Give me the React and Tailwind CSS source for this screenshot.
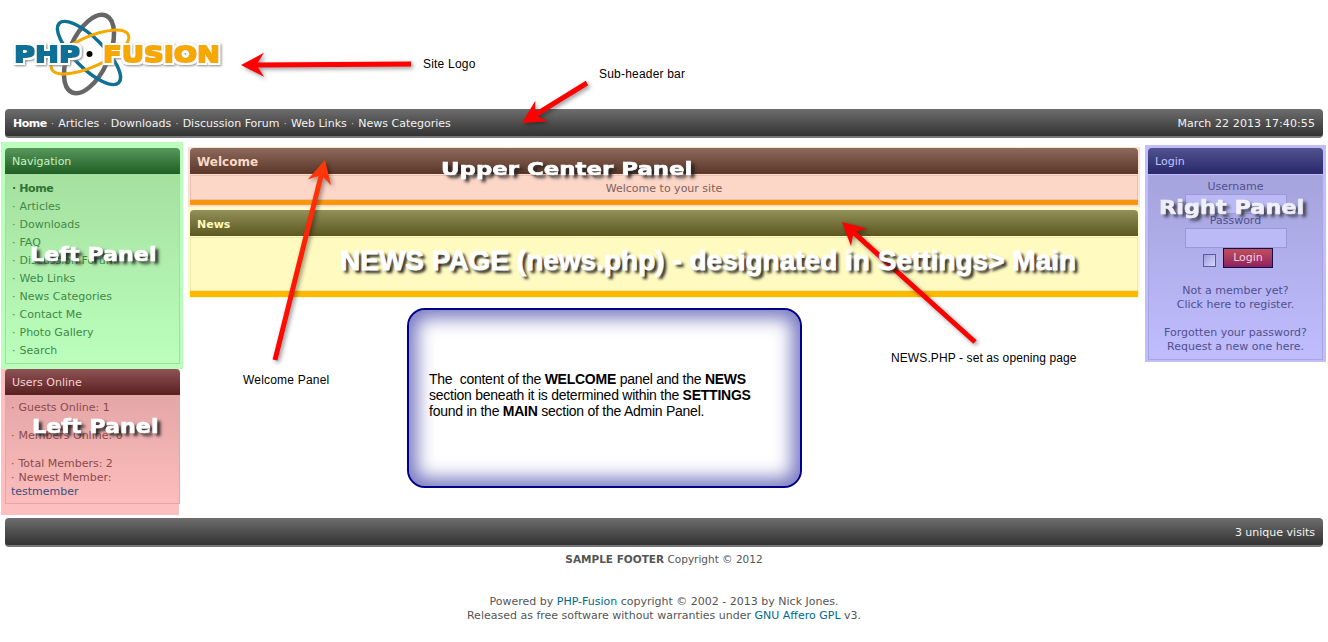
const Arrow = ({ x1, y1, x2, y2, color = '#ff0000', id }) => {
  // shaft plus a notched head, tip at x2/y2
  const len = Math.hypot(x2 - x1, y2 - y1);
  const ux = (x2 - x1) / len;
  const uy = (y2 - y1) / len;
  const nx = -uy;
  const ny = ux;
  const p = (along, side) => `${x2 - ux * along + nx * side},${y2 - uy * along + ny * side}`;
  const points = [
    p(len, 2.5), p(17, 2.5), p(23, 12), p(0, 0), p(23, -12), p(17, -2.5), p(len, -2.5),
  ].join(' ');
  return <polygon points={points} fill={id ? `url(#${id})` : color} />;
};

const Stamp = ({ className, children }) => (
  <span className={`absolute whitespace-nowrap origin-left font-['DejaVu_Sans',sans-serif] font-bold text-white [-webkit-text-stroke:0.6px_#fff] [text-shadow:3px_3px_3px_#222] ${className}`}>
    {children}
  </span>
);

const Annotations = () => (
  <div className="absolute inset-0 pointer-events-none font-['Liberation_Sans',sans-serif] text-black">
    <svg width="1328" height="642" className="absolute left-0 top-0 drop-shadow-[2px_2px_2px_rgba(0,0,0,0.4)]">
      <defs>
        <linearGradient id="welcomeArrow" gradientUnits="userSpaceOnUse" x1="275" y1="360" x2="325" y2="160">
          <stop offset="0" stopColor="#ff0000" />
          <stop offset="1" stopColor="#ff3a0a" />
        </linearGradient>
      </defs>
      <Arrow x1={411} y1={64} x2={241} y2={65} />
      <Arrow x1={587} y1={83} x2={522} y2={123} />
      <Arrow x1={275} y1={360} x2={325} y2={160} id="welcomeArrow" />
      <Arrow x1={975} y1={342} x2={842} y2={222} />
    </svg>

    <span className="absolute left-[423px] top-[57px] text-[12px] leading-[14px] tracking-[0.2px]">Site Logo</span>
    <span className="absolute left-[599px] top-[67px] text-[12px] leading-[14px] tracking-[0.2px]">Sub-header bar</span>
    <span className="absolute left-[243px] top-[373px] text-[12px] leading-[14px] tracking-[0.2px]">Welcome Panel</span>
    <span className="absolute left-[891px] top-[351px] text-[12px] leading-[14px] tracking-[0.1px]">NEWS.PHP - set as opening page</span>

    <Stamp className="left-[30px] top-[243px] text-[19px] leading-[22px] scale-x-[1.17]">Left Panel</Stamp>
    <Stamp className="left-[32px] top-[415px] text-[19px] leading-[22px] scale-x-[1.17]">Left Panel</Stamp>
    <Stamp className="left-[1159px] top-[196px] text-[19px] leading-[22px] scale-x-[1.18] opacity-80">Right Panel</Stamp>
    <Stamp className="left-[441px] top-[158px] text-[18px] leading-[21px] scale-x-[1.27]">Upper Center Panel</Stamp>
    <span className="absolute left-[340px] top-[245px] whitespace-nowrap font-['Liberation_Sans',sans-serif] font-bold text-[28px] leading-[32px] text-white [-webkit-text-stroke:0.8px_#fff] [text-shadow:3px_3px_3px_#222]">
      NEWS PAGE (news.php) - designated in Settings&gt; Main
    </span>
  </div>
);

const Logo = () => (
  <svg width="230" height="100" viewBox="0 0 230 100" className="block">
    <defs>
      <filter id="logoText" x="-10%" y="-30%" width="120%" height="160%">
        <feMorphology in="SourceGraphic" operator="dilate" radius="0.5" result="fat" />
        <feMorphology in="SourceAlpha" operator="dilate" radius="3" result="halo" />
        <feFlood floodColor="#ffffff" />
        <feComposite in2="halo" operator="in" result="white" />
        <feDropShadow in="white" dx="1" dy="1" stdDeviation="1" floodColor="#888888" result="shadowed" />
        <feMerge>
          <feMergeNode in="shadowed" />
          <feMergeNode in="fat" />
        </feMerge>
      </filter>
    </defs>
    <g fill="none">
      <ellipse cx="89" cy="54" rx="42" ry="20" transform="rotate(-66 89 54)" stroke="#666666" strokeWidth="4.5" />
      <ellipse cx="89" cy="53" rx="42" ry="15" transform="rotate(45 89 53)" stroke="#0f6f94" strokeWidth="3.5" />
      <ellipse cx="90" cy="52" rx="42" ry="15" transform="rotate(-24 90 52)" stroke="#f5a800" strokeWidth="3" />
    </g>
    <g fontFamily="'DejaVu Sans', sans-serif" fontWeight="bold" fontSize="22" filter="url(#logoText)">
      <text x="14" y="62" fill="#0f6f94" textLength="66" lengthAdjust="spacingAndGlyphs">PHP</text>
      <text x="103" y="62" fill="#f5a800" textLength="117" lengthAdjust="spacingAndGlyphs">FUSION</text>
    </g>
    <circle cx="89.5" cy="54" r="5" fill="#ffffff" />
    <circle cx="89.5" cy="54" r="3" fill="#000000" />
  </svg>
);

const DarkBar = ({ children }) => (
  <div className="mx-[5px] h-[29px] flex items-center justify-between px-[8px] pt-[4px] rounded-[4px] border-b-2 border-[#777] bg-gradient-to-b from-[#6e6e6e] to-[#333333] text-[11px] text-[#f2f2f2]">
    {children}
  </div>
);

const PanelHead = ({ className, children }) => (
  <div className={`h-[26px] flex items-center px-[7px] pt-[2px] rounded-t-[4px] text-[11px] ${className}`}>{children}</div>
);

const navLinks = ['Articles', 'Downloads', 'FAQ', 'Discussion Forum', 'Web Links', 'News Categories', 'Contact Me', 'Photo Gallery', 'Search'];

const LeftColumn = () => (
  <div className="w-[182px] ml-[1px] shrink-0">
    <div className="bg-[#bbfdbc] pt-[6px] px-[4px] pb-[4px] h-[227px] w-[182px]">
      <PanelHead className="w-[175px] bg-gradient-to-b from-[#58985c] to-[#1f5f24] text-[#c6f2c0]">Navigation</PanelHead>
      <div className="w-[175px] h-[190px] border border-[#a3dea0] bg-gradient-to-b from-[#a5e09f] to-[#bbffbc] pt-[5px] pl-[6px] text-[11px] leading-[18px] text-[#3f8a48]">
        <div className="font-bold text-[#2f7435]"><span className="mr-[3px]">·</span><span className="tracking-[-0.4px]">Home</span></div>
        {navLinks.map((link) => (
          <div key={link}><span className="mr-[4px]">·</span>{link}</div>
        ))}
      </div>
    </div>
    <div className="bg-[#fdbfbf] px-[4px] h-[146px] w-[178px]">
      <PanelHead className="w-[175px] h-[25px] bg-gradient-to-b from-[#8e5355] to-[#5a1f20] text-[#f6d2d0]">Users Online</PanelHead>
      <div className="w-[175px] h-[109px] border border-[#e0a8a8] bg-gradient-to-b from-[#e4a6a6] to-[#fdbdbd] pt-[5px] pl-[5px] text-[11px] leading-[14px] text-[#8c4a4c]">
        <div><span className="mr-[4px]">·</span>Guests Online: 1</div>
        <div className="mt-[14px]"><span className="mr-[4px]">·</span>Members Online: 0</div>
        <div className="mt-[14px]"><span className="mr-[4px]">·</span>Total Members: 2</div>
        <div><span className="mr-[4px]">·</span>Newest Member:</div>
        <div className="text-[#35517f]">testmember</div>
      </div>
    </div>
  </div>
);

const CenterColumn = () => (
  <div className="w-[952px] ml-[5px] mt-[5px] shrink-0">
    <div className="bg-[#fde0d4] px-[2px] pt-[1px] pb-[2px] h-[60px]">
      <PanelHead className="bg-gradient-to-b from-[#8d6a5c] to-[#5a3728] font-bold text-[#fcd8c4] text-[12px]">Welcome</PanelHead>
      <div className="mt-[1px] h-[25px] border border-[#eebfae] bg-[#fcd7c8] text-center text-[11px] leading-[25px] text-[#80605a]">Welcome to your site</div>
      <div className="h-[5px] bg-[#f7980a]" />
    </div>
    <div className="bg-[#fff9cc] px-[2px] pt-[3px] pb-[2px] h-[91px]">
      <PanelHead className="pt-[4px] bg-gradient-to-b from-[#93905a] to-[#5c5820] font-bold text-[#fdfbb8]">News</PanelHead>
      <div className="mt-[1px] h-[54px] border border-[#eee8a8] bg-[#fefac0]" />
      <div className="h-[6px] bg-[#fdb900]" />
    </div>
    <div className="mt-[10px] ml-[219px] w-[395px] h-[180px] rounded-[18px] border-2 border-[#00008b] bg-white shadow-[inset_0_0_18px_8px_rgba(30,30,150,0.6)] pt-[61px] pl-[20px] font-['Liberation_Sans',sans-serif] text-[14px] leading-[16px] text-black">
      <p className="whitespace-pre tracking-[-0.25px]">The  content of the <b>WELCOME</b> panel and the <b>NEWS</b></p>
      <p className="whitespace-pre tracking-[-0.25px]">section beneath it is determined within the <b>SETTINGS</b></p>
      <p className="whitespace-pre tracking-[-0.25px]">found in the <b>MAIN</b> section of the Admin Panel.</p>
    </div>
  </div>
);

const RightColumn = () => (
  <div className="w-[181px] ml-[5px] mt-[3px] shrink-0 h-[217px] bg-[#c0bdfd] pt-[3px] px-[3px] pb-[4px]">
    <PanelHead className="w-[175px] h-[25px] bg-gradient-to-b from-[#53528f] to-[#28286a] text-[#c4c4ff]">Login</PanelHead>
    <div className="w-[175px] h-[185px] mt-[1px] border border-[#a8a5e0] bg-gradient-to-b from-[#a5a3dc] to-[#c0bdff] text-center text-[11px] text-[#50508f]">
      <div className="leading-[14px] pt-[4px]">Username</div>
      <div className="mx-auto w-[102px] h-[20px] border border-[#9a98d8] bg-[#bcbaf6]" />
      <div className="leading-[14px]">Password</div>
      <div className="mx-auto w-[102px] h-[20px] border border-[#9a98d8] bg-[#bcbaf6]" />
      <div className="flex justify-center items-start gap-[7px] ml-[5px]">
        <span className="mt-[6px] w-[13px] h-[13px] border border-[#5a5aa0] bg-gradient-to-br from-[#9c9ce0] to-[#d8d8fb]" />
        <span className="w-[50px] h-[20px] border border-[#101050] bg-gradient-to-b from-[#c0505a] to-[#90205f] text-[#f6cfe0] leading-[18px]">Login</span>
      </div>
      <div className="mt-[16px] leading-[14px]">Not a member yet?</div>
      <div className="leading-[14px]">Click here to register.</div>
      <div className="mt-[14px] leading-[14px]">Forgotten your password?</div>
      <div className="leading-[14px]">Request a new one here.</div>
    </div>
  </div>
);

const App = () => {
  return (
    <div className="relative w-[1328px] h-[642px] overflow-hidden bg-white font-['DejaVu_Sans',sans-serif]">
      <div className="h-[109px]">
        <Logo />
      </div>

      <DarkBar>
        <div className="flex">
          <b className="text-white tracking-[-0.5px]">Home</b>
          {['Articles', 'Downloads', 'Discussion Forum', 'Web Links', 'News Categories'].map((link) => (
            <span key={link} className="whitespace-pre"><span className="mx-[4px] text-[#bbb]">·</span>{link}</span>
          ))}
        </div>
        <div className="tracking-[0.1px]">March 22 2013 17:40:55</div>
      </DarkBar>

      <div className="flex h-[376px] mt-[4px]">
        <LeftColumn />
        <CenterColumn />
        <RightColumn />
      </div>

      <DarkBar>
        <div />
        <div>3 unique visits</div>
      </DarkBar>

      <div className="mt-[5px] text-center text-[#555]">
        <div className="text-[10.5px] leading-[14px]"><b>SAMPLE FOOTER</b> Copyright © 2012</div>
        <div className="mt-[29px] text-[11px] leading-[14px]">Powered by <span className="text-[#00688b]">PHP-Fusion</span> copyright © 2002 - 2013 by Nick Jones.</div>
        <div className="text-[11px] leading-[14px]">Released as free software without warranties under <span className="text-[#00688b]">GNU Affero GPL</span> v3.</div>
      </div>

      <Annotations />
    </div>
  );
};

export default App;
